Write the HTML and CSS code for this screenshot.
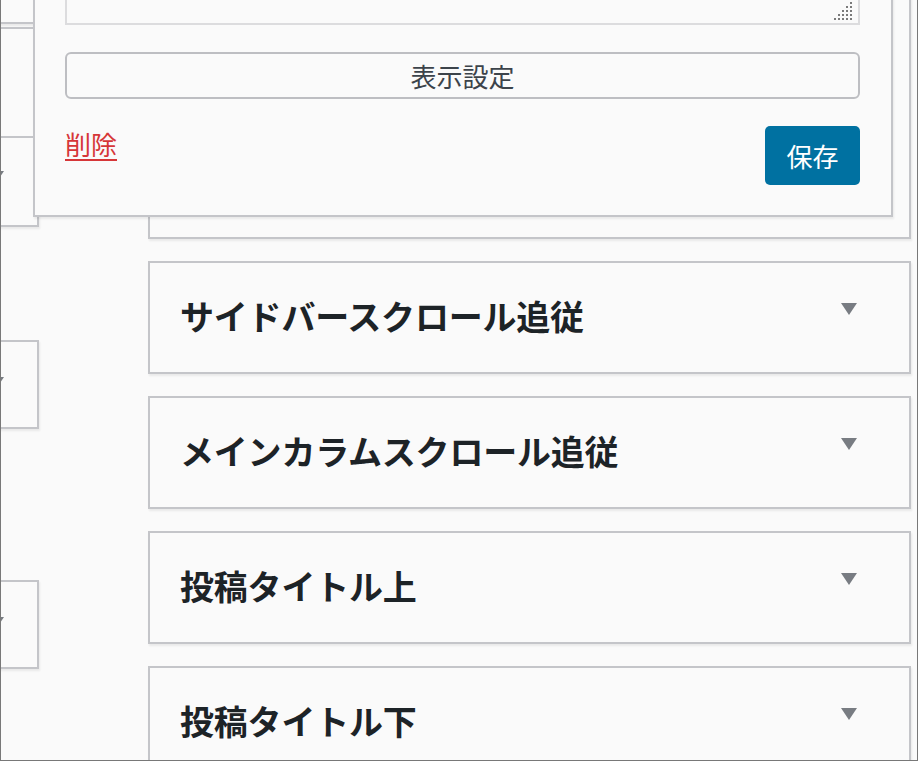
FILE: index.html
```html
<!DOCTYPE html>
<html lang="ja">
<head>
<meta charset="utf-8">
<title>ウィジェット</title>
<link rel="stylesheet" href="styles.css">
</head>
<body>
<div class="frame">
  <div class="lcol">
    <div class="lbox lbox-a"></div>
    <div class="lbox lbox-b"></div>
    <div class="lbox lbox-c"><span class="tri"></span></div>
    <div class="lbox lbox-d"><span class="tri"></span></div>
    <div class="lbox lbox-e"><span class="tri"></span></div>
  </div>
  <div class="rcol">
    <div class="widget widget-open">
      <div class="panel">
        <div class="ta-wrap">
          <textarea class="ta"></textarea>
          <svg class="grip" width="18" height="18" viewBox="0 0 18 18">
            <g fill="#7a7a7a">
              <rect x="16" y="0" width="2" height="2"/>
              <rect x="12" y="4" width="2" height="2"/><rect x="16" y="4" width="2" height="2"/>
              <rect x="8" y="8" width="2" height="2"/><rect x="12" y="8" width="2" height="2"/><rect x="16" y="8" width="2" height="2"/>
              <rect x="4" y="12" width="2" height="2"/><rect x="8" y="12" width="2" height="2"/><rect x="12" y="12" width="2" height="2"/><rect x="16" y="12" width="2" height="2"/>
              <rect x="0" y="16" width="2" height="2"/><rect x="4" y="16" width="2" height="2"/><rect x="8" y="16" width="2" height="2"/><rect x="12" y="16" width="2" height="2"/><rect x="16" y="16" width="2" height="2"/>
            </g>
          </svg>
        </div>
        <button class="btn-display" type="button">表示設定</button>
        <div class="actions">
          <a class="link-delete" href="#">削除</a>
          <button class="btn-save" type="button">保存</button>
        </div>
      </div>
    </div>
    <div class="widget">
      <h3 class="w-title">サイドバースクロール追従</h3>
      <span class="w-toggle"></span>
    </div>
    <div class="widget">
      <h3 class="w-title">メインカラムスクロール追従</h3>
      <span class="w-toggle"></span>
    </div>
    <div class="widget">
      <h3 class="w-title">投稿タイトル上</h3>
      <span class="w-toggle"></span>
    </div>
    <div class="widget">
      <h3 class="w-title">投稿タイトル下</h3>
      <span class="w-toggle"></span>
    </div>
  </div>
</div>
</body>
</html>
```

FILE: styles.css
```css
html, body {
  margin: 0;
  padding: 0;
  background: #fafafa;
}
body {
  font-family: "Noto Sans CJK JP", "Noto Sans", sans-serif;
}
.frame {
  width: 918px;
  height: 761px;
  box-sizing: border-box;
  border-left: 1px solid #787878;
  border-right: 1px solid #787878;
  border-bottom: 1px solid #787878;
  background: #fafafa;
  overflow: hidden;
  display: flex;
  align-items: flex-start;
}

/* left column (mostly off-screen) */
.lcol {
  width: 38px;
  flex: none;
  display: flex;
  flex-direction: column;
}
.lbox {
  width: 238px;
  margin-left: -200px;
  box-sizing: border-box;
  border: 2px solid #c4c5c9;
  background: #fafafa;
  box-shadow: 1px 2px 2px rgba(0, 0, 0, 0.07);
  display: flex;
  justify-content: flex-end;
  align-items: flex-start;
  padding-right: 33px;
}
.lbox-a { margin-top: -50px; height: 74px; }
.lbox-b { margin-top: 3px; height: 111px; }
.lbox-c { height: 89px; border-top: 0; padding-top: 33px; }
.lbox-d { margin-top: 113px; height: 89px; padding-top: 35px; }
.lbox-e { margin-top: 151px; height: 89px; padding-top: 35px; }
.tri {
  display: block;
  width: 0;
  height: 0;
  border-left: 8px solid transparent;
  border-right: 8px solid transparent;
  border-top: 12px solid #787c82;
}

/* right column */
.rcol {
  flex: none;
  width: 763px;
  margin-left: 109px;
  margin-top: -99px;
}
.widget {
  box-sizing: border-box;
  height: 113px;
  margin-top: 22px;
  border: 2px solid #c4c5c9;
  background: #fafafa;
  box-shadow: 1px 2px 2px rgba(0, 0, 0, 0.07);
  display: flex;
  align-items: center;
  padding-left: 30px;
  padding-right: 52px;
  padding-bottom: 4px;
}
.widget-open {
  margin-top: 0;
  height: auto;
  display: block;
  padding: 0;
}
.w-title {
  flex: 1;
  margin: 0;
  font-size: 34px;
  font-weight: 700;
  line-height: 44px;
  color: #1d2327;
  white-space: nowrap;
  letter-spacing: -0.2px;
}
.w-toggle {
  flex: none;
  width: 0;
  height: 0;
  border-left: 8px solid transparent;
  border-right: 8px solid transparent;
  border-top: 12px solid #787c82;
  margin-bottom: 13px;
}

/* expanded panel */
.panel {
  position: relative;
  z-index: 1;
  margin: 0 16px 20px -117px;
  border: 2px solid #c4c5c9;
  background: #fafafa;
  box-shadow: 1px 2px 2px rgba(0, 0, 0, 0.07);
  padding: 20px 31px 30px 30px;
}
.ta-wrap {
  position: relative;
  height: 100px;
}
.ta {
  display: block;
  width: 100%;
  height: 100px;
  box-sizing: border-box;
  margin: 0;
  border: 2px solid #dcdcde;
  background: #fafafa;
  resize: none;
  font: inherit;
}
.grip {
  position: absolute;
  right: 8px;
  bottom: 5px;
}
.btn-display {
  display: block;
  width: 100%;
  height: 47px;
  margin-top: 27px;
  box-sizing: border-box;
  border: 2px solid #bdbec2;
  border-radius: 6px;
  background: #fafafa;
  color: #3c434a;
  font-family: inherit;
  font-size: 26px;
  line-height: 43px;
  padding: 0;
}
.actions {
  margin-top: 27px;
  display: flex;
  justify-content: space-between;
  align-items: flex-start;
}
.link-delete {
  color: #d63638;
  font-size: 26px;
  line-height: 36px;
  text-decoration: underline;
  text-decoration-thickness: 2px;
  text-underline-offset: 4px;
}
.btn-save {
  width: 95px;
  height: 59px;
  border: 0;
  border-radius: 5px;
  background: #0071a1;
  color: #ffffff;
  font-family: inherit;
  font-size: 26px;
  line-height: 59px;
  padding: 0;
}
```
